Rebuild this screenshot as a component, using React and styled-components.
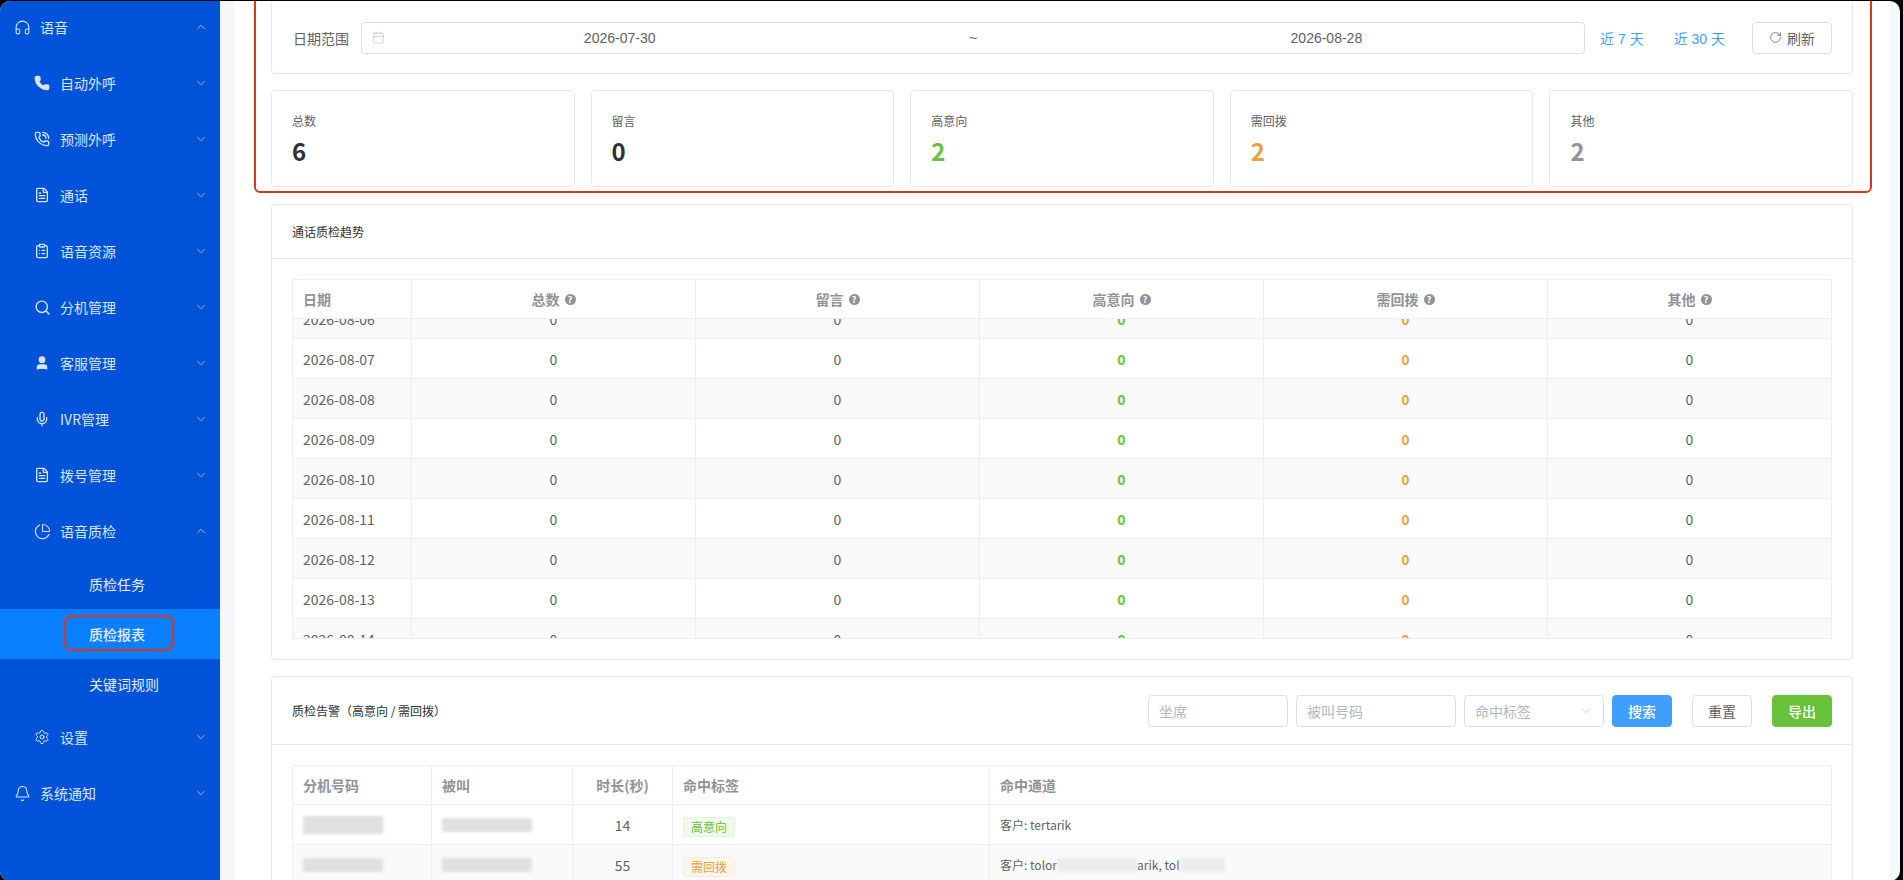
import React from 'react';
import styled, { createGlobalStyle } from 'styled-components';
import { ChevronUp, ChevronDown, Headphones, Phone, PhoneCall, FileText, ClipboardList, Search, User, Mic, PieChart, Settings, Bell, RotateCw, Calendar } from 'lucide-react';

const GlobalStyle = createGlobalStyle`
    html, body {
        margin: 0;
        height: 100%;
        overflow: hidden;
        background: #000;
    }
    body {
        font-family: 'Noto Sans CJK SC', 'Noto Sans', sans-serif;
        color: #606266;
    }
    * { box-sizing: border-box; }
`;

const Shell = styled.div`
    position: relative;
    display: flex;
    width: 1900px;
    height: 880px;
    margin-top: 1px;
    overflow: hidden;
    background: #f5f7fb;
    border-radius: 10px;
`;

const Sidebar = styled.aside`
    flex: 0 0 220px;
    background: #0052d9;
    color: #d8e4fa;
    font-size: 14px;
`;

const MenuRow = styled.div`
    display: flex;
    align-items: center;
    height: 56px;
    padding-left: ${p => (p.$nested ? 32 : 12)}px;
    padding-right: 12px;
    margin-top: ${p => (p.$first ? -2 : 0)}px;
    gap: 8px;

    svg.arrow { margin-left: auto; opacity: 0.8; }
`;

const MenuIcon = styled.span`
    display: flex;
    justify-content: center;
    width: 20px;
`;

const SubItem = styled.div`
    display: flex;
    align-items: center;
    height: 50px;
    padding-left: 89px;
    color: #e4ecfb;
    background: ${p => (p.$active ? '#0a80ff' : 'transparent')};
    font-weight: ${p => (p.$active ? 500 : 400)};
`;

const Main = styled.main`
    flex: 0 0 1655px;
    margin-left: 15px;
    padding: 0 37px 0 36px;
    background: #fff;
`;

const Card = styled.section`
    background: #fff;
    border: 1px solid #e6e8f0;
    border-radius: 4px;
    margin-bottom: ${p => p.$mb || 0}px;
`;

const FilterBar = styled(Card)`
    display: flex;
    align-items: center;
    height: 73px;
    padding: 0 20px 0 21px;
    border-top-color: transparent;
`;

const FilterLabel = styled.span`
    flex: none;
    width: 56px;
    margin-right: 12px;
    font-size: 14px;
    white-space: nowrap;
`;

const RangeBox = styled.div`
    flex: 1;
    display: grid;
    grid-template-columns: 81px repeat(3, 1fr) 81px;
    align-items: center;
    height: 32px;
    border: 1px solid #dcdfe6;
    border-radius: 4px;
    font-family: 'Liberation Sans', sans-serif;
    font-size: 14px;
    text-align: center;
    color: #606266;

    svg { margin-left: 10px; color: #c0c4cc; }
`;

const QuickLink = styled.a`
    margin-left: ${p => p.$ml}px;
    color: #409eff;
    font-size: 14px;
    font-family: 'Liberation Sans', 'Noto Sans CJK SC', sans-serif;
    white-space: nowrap;
`;

const OutlineButton = styled.button`
    display: flex;
    align-items: center;
    justify-content: center;
    gap: 5px;
    width: ${p => p.$w || 60}px;
    height: 32px;
    margin-left: ${p => p.$ml || 0}px;
    padding: 0;
    background: #fff;
    border: 1px solid #dcdfe6;
    border-radius: 4px;
    color: #606266;
    font-family: inherit;
    font-size: 14px;
`;

const SolidButton = styled(OutlineButton)`
    background: ${p => p.$color};
    border-color: ${p => p.$color};
    color: #fff;
    font-weight: 500;
`;

const StatGrid = styled.div`
    display: grid;
    grid-template-columns: repeat(5, 1fr);
    gap: 16px;
    margin-bottom: 17px;
`;

const StatCard = styled(Card)`
    height: 97px;
    padding: 20px;
`;

const StatLabel = styled.div`
    font-size: 12px;
    line-height: 20px;
    color: #606266;
`;

const StatValue = styled.div`
    margin-top: 4px;
    font-size: 24px;
    line-height: 32px;
    font-weight: 700;
    color: ${p => p.$color || '#303133'};
`;

const CardHeader = styled.header`
    display: flex;
    align-items: center;
    justify-content: space-between;
    height: ${p => p.$h}px;
    padding: 0 20px;
    border-bottom: 1px solid #e6e8f0;
    font-size: 12px;
    color: #303133;
`;

const CardBody = styled.div`
    padding: 20px;
`;

const Controls = styled.div`
    display: flex;
    gap: 8px;
`;

const Field = styled.div`
    display: flex;
    align-items: center;
    justify-content: space-between;
    width: ${p => p.$w}px;
    height: 32px;
    padding: 0 10px;
    border: 1px solid #dcdfe6;
    border-radius: 4px;
    color: #b4b8c0;
    font-size: 14px;
`;

const Table = styled.div`
    border: 1px solid #ebeef5;
    border-right: 0;
    font-size: 14px;
    overflow: hidden;
`;

const Row = styled.div`
    display: grid;
    grid-template-columns: ${p => p.$cols};
    height: ${p => p.$h || 40}px;
    background: ${p => (p.$striped ? '#fafafa' : '#fff')};
    border-bottom: 1px solid #ebeef5;
`;

const Cell = styled.div`
    display: flex;
    align-items: center;
    justify-content: ${p => (p.$center ? 'center' : 'flex-start')};
    gap: 5px;
    padding: 0 10px;
    border-right: 1px solid #ebeef5;
    color: ${p => p.$color || '#606266'};
    font-weight: ${p => (p.$bold ? 700 : 400)};
    font-size: ${p => p.$size || 14}px;
    overflow: hidden;
    white-space: nowrap;
`;

const HeadCell = styled(Cell)`
    color: #909399;
    font-weight: 700;
`;

const HelpDot = styled.span`
    display: inline-flex;
    align-items: center;
    justify-content: center;
    width: 11px;
    height: 11px;
    border-radius: 50%;
    background: #909399;
    color: #fff;
    font-size: 9px;
    line-height: 1;
`;

const ScrollBody = styled.div`
    height: 319px;
    overflow: hidden;
`;

const ScrollInner = styled.div`
    margin-top: -20px;
`;

const Tag = styled.span`
    display: inline-flex;
    align-items: center;
    height: 20px;
    margin-top: 4px;
    padding: 0 7px;
    border: 1px solid ${p => p.$border};
    border-radius: 3px;
    background: ${p => p.$bg};
    color: ${p => p.$color};
    font-size: 12px;
`;

const Smudge = styled.span`
    display: inline-block;
    flex: none;
    width: ${p => p.$w}px;
    height: ${p => p.$h || 14}px;
    margin-left: ${p => p.$ml || 0}px;
    background: ${p => p.$color || '#e0e0e0'};
    filter: blur(1.5px);
`;

const Callout = styled.div`
    position: absolute;
    border: 2px solid #d9381e;
    border-radius: ${p => p.$r}px;
    left: ${p => p.$x}px;
    top: ${p => p.$y}px;
    width: ${p => p.$w}px;
    height: ${p => p.$h}px;
    pointer-events: none;
`;

const menuTop = [
    { label: '自动外呼', icon: <Phone size={16} fill="currentColor" /> },
    { label: '预测外呼', icon: <PhoneCall size={16} /> },
    { label: '通话', icon: <FileText size={16} /> },
    { label: '语音资源', icon: <ClipboardList size={16} /> },
    { label: '分机管理', icon: <Search size={17} /> },
    { label: '客服管理', icon: <User size={16} fill="currentColor" /> },
    { label: 'IVR管理', icon: <Mic size={16} /> },
    { label: '拨号管理', icon: <FileText size={16} /> },
];

const trendCols = '119px repeat(5, 1fr)';
const alertCols = '139px 141px 100px 317px 1fr';
const dates = ['06', '07', '08', '09', '10', '11', '12', '13', '14'];

const Arrow = ({ up }) => (up
    ? <ChevronUp className="arrow" size={14} strokeWidth={1.5} />
    : <ChevronDown className="arrow" size={14} strokeWidth={1.5} />);

const App = () => (
    <Shell>
        <GlobalStyle />
        <Sidebar>
            <MenuRow $first>
                <MenuIcon><Headphones size={17} strokeWidth={1.5} /></MenuIcon>
                语音
                <Arrow up />
            </MenuRow>
            {menuTop.map(m => (
                <MenuRow $nested key={m.label}>
                    <MenuIcon>{m.icon}</MenuIcon>
                    {m.label}
                    <Arrow />
                </MenuRow>
            ))}
            <MenuRow $nested>
                <MenuIcon><PieChart size={17} strokeWidth={1.5} /></MenuIcon>
                语音质检
                <Arrow up />
            </MenuRow>
            <SubItem>质检任务</SubItem>
            <SubItem $active>质检报表</SubItem>
            <SubItem>关键词规则</SubItem>
            <MenuRow $nested>
                <MenuIcon><Settings size={16} strokeWidth={1.5} /></MenuIcon>
                设置
                <Arrow />
            </MenuRow>
            <MenuRow>
                <MenuIcon><Bell size={17} strokeWidth={1.5} /></MenuIcon>
                系统通知
                <Arrow />
            </MenuRow>
        </Sidebar>
        <Main>
            <FilterBar $mb={16}>
                <FilterLabel>日期范围</FilterLabel>
                <RangeBox>
                    <Calendar size={13} strokeWidth={1.3} />
                    <span>2026-07-30</span>
                    <span>~</span>
                    <span>2026-08-28</span>
                    <span />
                </RangeBox>
                <QuickLink $ml={15}>近 7 天</QuickLink>
                <QuickLink $ml={30}>近 30 天</QuickLink>
                <OutlineButton $w={80} $ml={27}><RotateCw size={13} strokeWidth={1.4} />刷新</OutlineButton>
            </FilterBar>
            <StatGrid>
                <StatCard><StatLabel>总数</StatLabel><StatValue>6</StatValue></StatCard>
                <StatCard><StatLabel>留言</StatLabel><StatValue>0</StatValue></StatCard>
                <StatCard><StatLabel>高意向</StatLabel><StatValue $color="#67c23a">2</StatValue></StatCard>
                <StatCard><StatLabel>需回拨</StatLabel><StatValue $color="#e6a23c">2</StatValue></StatCard>
                <StatCard><StatLabel>其他</StatLabel><StatValue $color="#909399">2</StatValue></StatCard>
            </StatGrid>
            <Card $mb={16}>
                <CardHeader $h={54}>通话质检趋势</CardHeader>
                <CardBody>
                    <Table>
                        <Row $cols={trendCols} $h={39}>
                            <HeadCell>日期</HeadCell>
                            {['总数', '留言', '高意向', '需回拨', '其他'].map(h => (
                                <HeadCell $center key={h}>{h}<HelpDot>?</HelpDot></HeadCell>
                            ))}
                        </Row>
                        <ScrollBody>
                            <ScrollInner>
                                {dates.map((d, i) => (
                                    <Row $cols={trendCols} $striped={i % 2 === 0} key={d}>
                                        <Cell>2026-08-{d}</Cell>
                                        <Cell $center>0</Cell>
                                        <Cell $center>0</Cell>
                                        <Cell $center $bold $color="#67c23a">0</Cell>
                                        <Cell $center $bold $color="#e6a23c">0</Cell>
                                        <Cell $center>0</Cell>
                                    </Row>
                                ))}
                            </ScrollInner>
                        </ScrollBody>
                    </Table>
                </CardBody>
            </Card>
            <Card>
                <CardHeader $h={68}>
                    质检告警（高意向 / 需回拨）
                    <Controls>
                        <Field $w={140}>坐席</Field>
                        <Field $w={160}>被叫号码</Field>
                        <Field $w={140}>命中标签<ChevronDown size={14} strokeWidth={1.2} color="#c0c4cc" /></Field>
                        <SolidButton $color="#409eff">搜索</SolidButton>
                        <OutlineButton $ml={12}>重置</OutlineButton>
                        <SolidButton $color="#67c23a" $ml={12}>导出</SolidButton>
                    </Controls>
                </CardHeader>
                <CardBody>
                    <Table>
                        <Row $cols={alertCols} $h={39}>
                            <HeadCell>分机号码</HeadCell>
                            <HeadCell>被叫</HeadCell>
                            <HeadCell $center>时长(秒)</HeadCell>
                            <HeadCell>命中标签</HeadCell>
                            <HeadCell>命中通道</HeadCell>
                        </Row>
                        <Row $cols={alertCols}>
                            <Cell><Smudge $w={80} $h={18} /></Cell>
                            <Cell><Smudge $w={90} /></Cell>
                            <Cell $center>14</Cell>
                            <Cell><Tag $bg="#f0f9eb" $border="#e1f3d8" $color="#67c23a">高意向</Tag></Cell>
                            <Cell $size={12}>客户: tertarik</Cell>
                        </Row>
                        <Row $cols={alertCols} $striped>
                            <Cell><Smudge $w={80} /></Cell>
                            <Cell><Smudge $w={90} /></Cell>
                            <Cell $center>55</Cell>
                            <Cell><Tag $bg="#fdf6ec" $border="#faecd8" $color="#e6a23c">需回拨</Tag></Cell>
                            <Cell $size={12} style={{ gap: 0 }}>客户: tolor<Smudge $w={80} $color="#ececec" />arik, tol<Smudge $w={45} $color="#ececec" /></Cell>
                        </Row>
                    </Table>
                </CardBody>
            </Card>
        </Main>
        <Callout $x={254} $y={-6} $w={1618} $h={198} $r={6} />
        <Callout $x={64} $y={614} $w={110} $h={36} $r={8} />
    </Shell>
);

export default App;
